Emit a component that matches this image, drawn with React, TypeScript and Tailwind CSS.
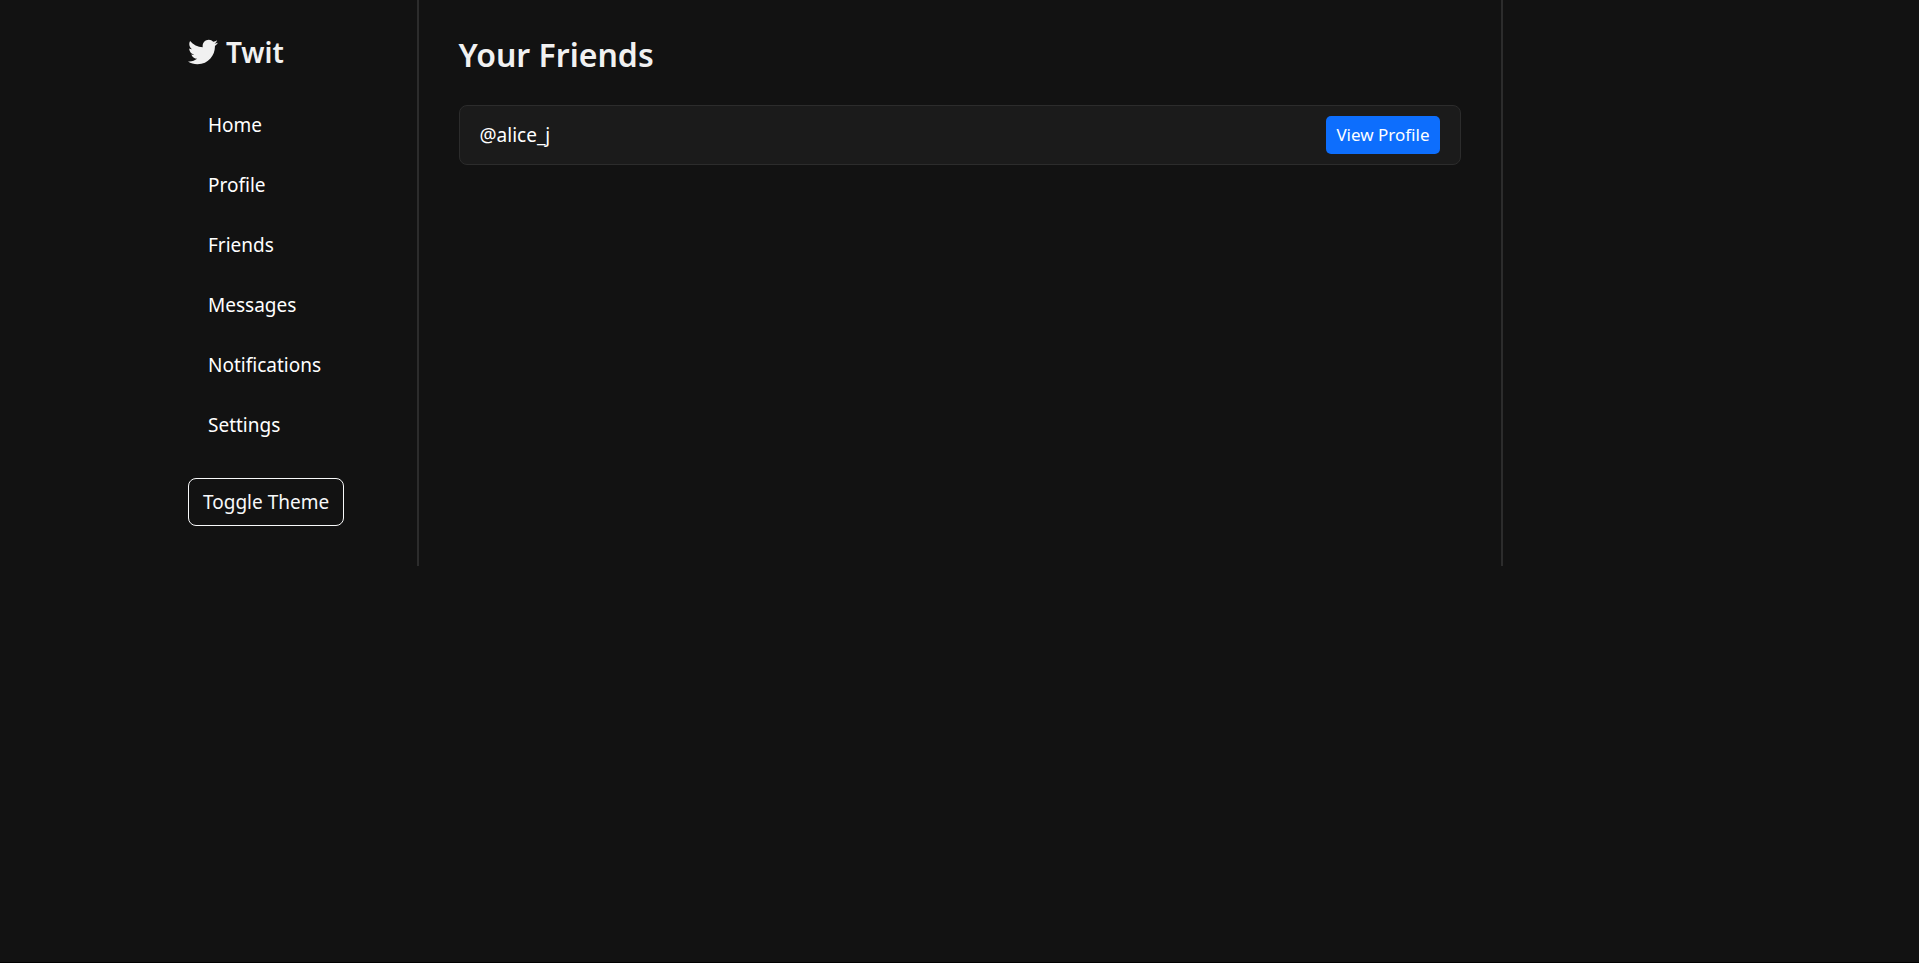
import { FaTwitter } from "react-icons/fa";

const links = ["Home", "Profile", "Friends", "Messages", "Notifications", "Settings"];
const friends = ["alice_j"];

export default function App() {
  return (
    <div className="min-h-screen border-b border-black bg-[#121212] font-['Noto_Sans',sans-serif] text-[19px] leading-[30px] text-[#f1f1f1]">
      <div className="mx-auto grid max-w-[1629px] grid-cols-12">
        <aside className="col-span-2 py-8 pl-[43px]">
          <h2 className="flex items-center gap-2 text-[28px] leading-10 font-semibold">
            <FaTwitter className="size-[30px]" aria-hidden="true" />
            Twit
          </h2>
          <nav className="mt-7">
            <ul className="flex flex-col gap-[10px]">
              {links.map((label) => (
                <li key={label}>
                  <a href="#" className="block px-5 py-[10px] text-white">
                    {label}
                  </a>
                </li>
              ))}
            </ul>
          </nav>
          <button
            type="button"
            className="mt-7 mb-2 rounded-lg border border-[#f8f9fa] px-[14px] py-2 text-[#f8f9fa]"
          >
            Toggle Theme
          </button>
        </aside>
        <main className="col-span-8 border-x-2 border-[#2c2c2c] px-10 py-8">
          <h1 className="text-[32px] leading-[46px] font-semibold">Your Friends</h1>
          <ul className="mt-[27px] flex flex-col gap-[10px]">
            {friends.map((name) => (
              <li
                key={name}
                className="flex items-center justify-between rounded-lg border border-[#2c2c2c] bg-[#1b1b1b] px-5 py-[10px] text-white"
              >
                <span>@{name}</span>
                <a
                  href="#"
                  className="rounded-[5px] bg-[#0d6efd] px-[10px] py-1 text-[17px] leading-[30px] text-white"
                >
                  View Profile
                </a>
              </li>
            ))}
          </ul>
        </main>
      </div>
    </div>
  );
}
